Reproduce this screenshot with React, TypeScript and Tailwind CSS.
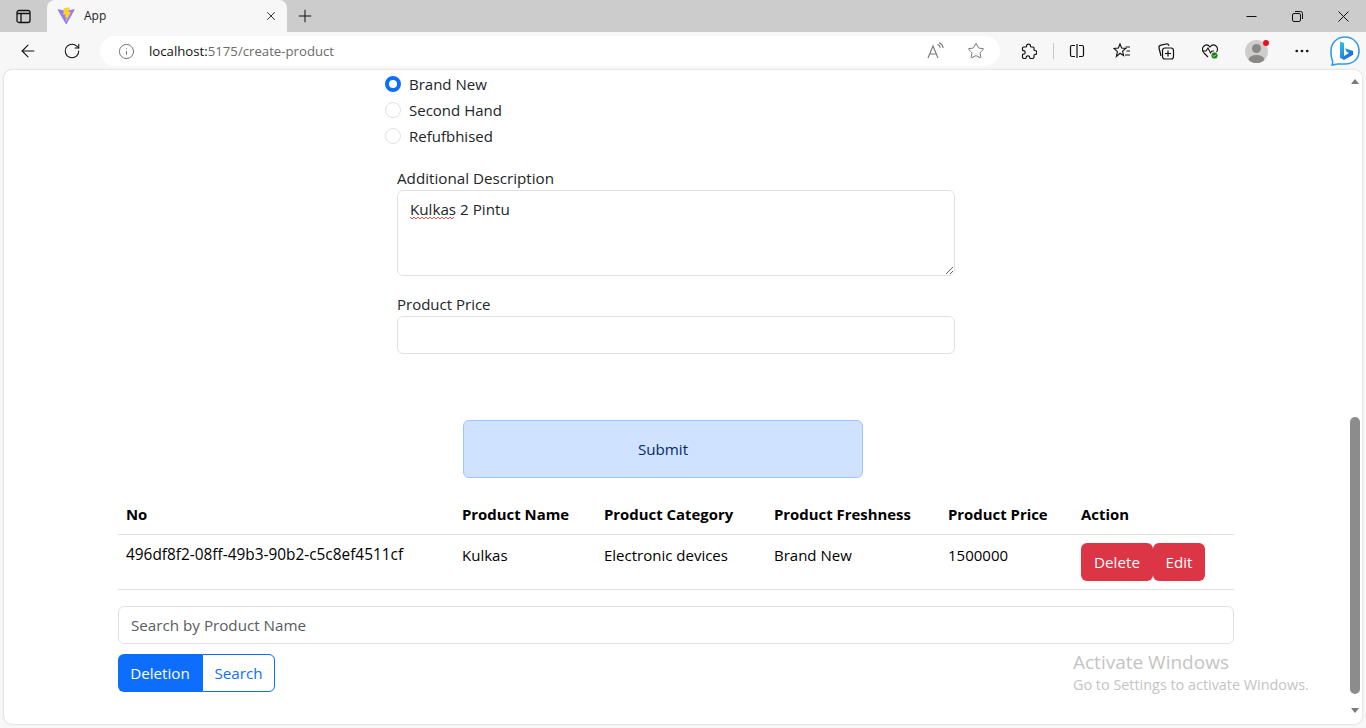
import { ArrowLeft, RotateCw, Info, Star, Plus, X, MoreHorizontal } from 'lucide-react'

const rows = ['Brand New', 'Second Hand', 'Refufbhised']

function ViteLogo() {
  return (
    <svg width="18" height="18" viewBox="0 0 410 404">
      <path fill="#8f7bff" d="M399 63 219 384c-4 7-14 7-18 0L18 63c-4-7 2-16 10-14l180 32c1 0 2 0 4 0l176-32c8-1 15 7 11 14Z" />
      <path fill="#ffd028" d="M292 1 156 28c-2 0-4 2-4 5l-8 141c0 3 3 6 6 5l38-9c4-1 7 2 6 6l-11 55c-1 4 3 7 6 6l23-7c4-1 7 2 6 6l-18 86c-1 5 6 8 9 3l2-3 106-212c2-4-1-8-5-7l-39 8c-4 1-7-3-6-6l25-88c1-4-3-8-6-7Z" />
    </svg>
  )
}

function BingLogo() {
  return (
    <svg width="32" height="32" viewBox="0 0 32 32">
      <defs>
        <linearGradient id="bingB" x1="0" y1="0" x2="1" y2="1">
          <stop offset="0" stopColor="#2fc6e8" />
          <stop offset="1" stopColor="#1a56d6" />
        </linearGradient>
      </defs>
      <path fill="#fff" stroke="#2f9be8" strokeWidth="1.6" d="M16 2c8 0 14 6 14 14s-6 13-14 13H9c-2 0-5 1-6 1 1-2 1-4 0-6-1-2-1-5-1-8C2 8 8 2 16 2Z" />
      <path fill="url(#bingB)" d="M11 6.500l4 1.500v13l5-3-2.500-1.200-1.400-3.600 8 2.800v3.700L15 25l-4-2.200Z" />
    </svg>
  )
}

function BrowserChrome() {
  return (
    <>
      <div className="flex h-8 shrink-0 items-end bg-[#cccccc]">
        <div className="flex h-8 w-[47px] items-center justify-center">
          <svg width="15" height="15" viewBox="0 0 15 15" fill="none" stroke="#111" strokeWidth="1.3">
            <rect x="1" y="1.500" width="13" height="12" rx="2" />
            <path d="M1 4.500h13M5 4.500v9" />
          </svg>
        </div>
        <div className="flex h-8 w-[240px] items-center rounded-t-lg bg-[#f7f7f7] pl-[10px] pr-[9px]">
          <ViteLogo />
          <span className="ml-[9px] flex-1 text-xs text-[#222]">App</span>
          <X size={14} strokeWidth={1.6} className="text-[#222]" />
        </div>
        <div className="flex h-8 w-[36px] items-center justify-center">
          <Plus size={20} strokeWidth={1.2} className="text-[#111]" />
        </div>
        <div className="flex-1" />
        <div className="flex h-8 items-center text-[#111]">
          <div className="flex w-[46px] justify-center">
            <svg width="11" height="11" viewBox="0 0 11 11" stroke="#111" strokeWidth="1">
              <path d="M0.500 5.500h10" />
            </svg>
          </div>
          <div className="flex w-[46px] justify-center">
            <svg width="11" height="11" viewBox="0 0 11 11" fill="none" stroke="#111" strokeWidth="1">
              <rect x="0.500" y="2.500" width="8" height="8" rx="1.500" />
              <path d="M3 0.500h5.500a2 2 0 0 1 2 2V8" />
            </svg>
          </div>
          <div className="flex w-[46px] justify-center">
            <svg width="11" height="11" viewBox="0 0 11 11" stroke="#111" strokeWidth="1">
              <path d="M0.500 0.500l10 10M10.500 0.500l-10 10" />
            </svg>
          </div>
        </div>
      </div>
      <div className="flex h-[38px] shrink-0 items-center bg-[#f7f7f7]">
        <div className="flex w-[100px] items-center pl-[18px]">
          <ArrowLeft size={20} strokeWidth={1.3} className="text-[#111]" />
          <RotateCw size={18} strokeWidth={1.4} className="ml-[25px] text-[#111]" />
        </div>
        <div className="flex h-[30px] w-[900px] items-center rounded-full bg-white pl-[18px] pr-[15px]">
          <Info size={17} strokeWidth={1.3} className="text-[#666]" />
          <span className="ml-[14px] mt-px text-[13.200px] text-[#111]">
            localhost:<span className="text-[#6b6b6b]">5175/create-product</span>
          </span>
          <div className="flex-1" />
          <svg width="18" height="18" viewBox="0 0 18 18" fill="none" stroke="#777" strokeWidth="1.1">
            <path d="M1 16 6 4l5 12M3 12h6M10.500 2.500c1.500.5 2.500 1.800 2.800 3.300M12 0.800c2.200.8 3.800 2.800 4.200 5" />
          </svg>
          <Star size={18} strokeWidth={1.2} className="ml-[22px] text-[#666]" />
        </div>
        <div className="flex flex-1 items-center pl-[20px] text-[#111]">
          <svg width="17" height="17" viewBox="0 0 17 17" fill="none" stroke="#111" strokeWidth="1.2">
            <path d="M6.500 3.200a2 2 0 0 1 4 0c0 .6 0 .8 1 .8h1.500a1 1 0 0 1 1 1v1.500c0 1 .3 1 .8 1a2 2 0 0 1 0 4c-.5 0-.8 0-.8 1V14a1.500 1.500 0 0 1-1.500 1.500h-2c-.8 0-.8-.4-.8-.9a1.800 1.800 0 0 0-3.600 0c0 .5 0 .9-.8.9H4a1.500 1.500 0 0 1-1.500-1.500v-2c0-.8.4-.8.9-.8a1.800 1.800 0 0 0 0-3.600c-.5 0-.9 0-.9-.8V5a1 1 0 0 1 1-1h1.800c1 0 1.200-.2 1.200-.8Z" />
          </svg>
          <div className="ml-[16px] h-[16px] w-px bg-[#c8c8c8]" />
          <svg className="ml-[15px]" width="16" height="16" viewBox="0 0 16 16" fill="none" stroke="#111" strokeWidth="1.2">
            <path d="M6 2.500H3a1.500 1.500 0 0 0-1.500 1.500v8A1.500 1.500 0 0 0 3 13.500h3M10 2.500h3A1.500 1.500 0 0 1 14.500 4v8a1.500 1.500 0 0 1-1.500 1.500h-3M8 1v14" />
          </svg>
          <svg className="ml-[28px]" width="18" height="18" viewBox="0 0 18 18" fill="none" stroke="#111" strokeWidth="1.100">
            <path d="M7 2l1.600 4 4.200.4-3.200 2.800 1 4.300L7 11.300 3.400 14.500l1-4.800L1 6.400l4.400-.4ZM12.500 5H17M13.500 9H17M12 13h5" />
          </svg>
          <svg className="ml-[26px]" width="18" height="18" viewBox="0 0 18 18" fill="none" stroke="#111" strokeWidth="1.2">
            <path d="M4 14 2 6c-.3-1.500.5-2.500 2-2.800L9 2c1.500-.3 2.500.3 3 1.800" />
            <rect x="5.500" y="6" width="11" height="11" rx="2.500" fill="#f7f7f7" />
            <path d="M11 8.500v6M8 11.500h6" />
          </svg>
          <svg className="ml-[26px]" width="18" height="18" viewBox="0 0 18 18" fill="none" stroke="#111" strokeWidth="1.100">
            <path d="M3 11C1 8.500 1 5.500 3 4s4.500-1 6 1c1.500-2 4-2.500 6-1s2 4.500 0 7l-1 1M3 11l4 4M1 9h4l2-3 2.500 5 1.500-2h2" />
            <circle cx="13.500" cy="13.500" r="3.500" fill="#107c10" stroke="#f7f7f7" strokeWidth="0.8" />
            <path d="M12 13.500l1 1 2-2" stroke="#fff" strokeWidth="0.9" />
          </svg>
          <div className="relative ml-[26px] flex h-[23px] w-[23px] items-center justify-center overflow-hidden rounded-full bg-[#cfcdcb]">
            <svg width="23" height="23" viewBox="0 0 23 23" fill="#8a8886">
              <circle cx="11.500" cy="8.500" r="4.500" />
              <ellipse cx="11.500" cy="20" rx="8" ry="5" />
            </svg>
          </div>
          <div className="relative -ml-[5px] -mt-[16px] h-[6px] w-[6px] rounded-full bg-[#e81123]" />
          <MoreHorizontal size={18} strokeWidth={1.6} className="ml-[24px]" />
          <div className="ml-[18px]">
            <BingLogo />
          </div>
        </div>
      </div>
    </>
  )
}

function ProductForm() {
  return (
    <div className="mx-auto w-[582px] pt-px">
      {rows.map((label, i) => (
        <label key={label} className="flex h-[26px] items-center text-[15px] text-[#212529]">
          <input
            type="radio"
            name="freshness"
            defaultChecked={i === 0}
            className="h-4 w-4 appearance-none rounded-full border border-[#dee2e6] bg-white checked:border-[4px] checked:border-[#0d6efd]"
          />
          <span className="ml-2">{label}</span>
        </label>
      ))}
      <div className="px-3 pt-[17px]">
        <div className="h-6 text-[#212529]">Additional Description</div>
        <div className="relative">
          <textarea
            defaultValue="Kulkas 2 Pintu"
            spellCheck={false}
            className="block h-[86px] w-full rounded-md border border-[#dee2e6] px-3 py-[6px] text-[#212529] outline-none"
          />
          <svg className="absolute left-[13px] top-[26px]" width="45" height="4" viewBox="0 0 45 4" fill="none" stroke="#ef4444" strokeWidth="0.9">
            <path d="M0 1l2 2 2-2 2 2 2-2 2 2 2-2 2 2 2-2 2 2 2-2 2 2 2-2 2 2 2-2 2 2 2-2 2 2 2-2 2 2 2-2 2 2 2-2" />
          </svg>
        </div>
        <div className="mt-4 h-6 text-[15px] text-[#212529]">Product Price</div>
        <input className="block h-[38px] w-full rounded-md border border-[#dee2e6] px-3 outline-none" />
      </div>
      <button className="ml-[78px] mt-[66px] block h-[58px] w-[400px] rounded-md border border-[#9ec5fe] bg-[#cfe2ff] text-[#052c65]">
        Submit
      </button>
    </div>
  )
}

function ProductTable() {
  return (
    <div className="mx-auto mt-4 w-[1116px]">
      <table className="w-full table-fixed border-collapse text-left text-black">
        <thead className="text-[14.900px]">
          <tr className="border-b border-[#dee2e6]">
            <th className="w-[336px] px-2 py-2 font-bold">No</th>
            <th className="w-[142px] px-2 py-2 font-bold">Product Name</th>
            <th className="w-[170px] px-2 py-2 font-bold">Product Category</th>
            <th className="w-[174px] px-2 py-2 font-bold">Product Freshness</th>
            <th className="w-[133px] px-2 py-2 font-bold">Product Price</th>
            <th className="px-2 py-2 font-bold">Action</th>
          </tr>
        </thead>
        <tbody>
          <tr className="border-b border-[#dee2e6] align-top">
            <td className="px-2 py-2 text-[15.400px]">496df8f2-08ff-49b3-90b2-c5c8ef4511cf</td>
            <td className="px-2 py-2 text-[15px]">Kulkas</td>
            <td className="px-2 py-2 text-[15px]">Electronic devices</td>
            <td className="px-2 py-2 text-[15px]">Brand New</td>
            <td className="px-2 py-2 text-[15px]">1500000</td>
            <td className="px-2 py-2">
              <div className="flex">
                <button className="h-[38px] w-[72px] rounded-md bg-[#dc3545] text-white">Delete</button>
                <button className="h-[38px] w-[52px] rounded-md bg-[#dc3545] text-white">Edit</button>
              </div>
            </td>
          </tr>
        </tbody>
      </table>
      <input
        placeholder="Search by Product Name"
        className="mt-4 block h-[38px] w-full rounded-md border border-[#dee2e6] px-3 outline-none placeholder:text-[#595c5f]"
      />
      <div className="mt-[10px] flex">
        <button className="h-[38px] w-[84px] rounded-l-md bg-[#0d6efd] text-white">Deletion</button>
        <button className="h-[38px] w-[73px] rounded-r-md border border-[#0d6efd] bg-white text-[#0d6efd]">Search</button>
      </div>
    </div>
  )
}

export default function App() {
  return (
    <div className='flex h-screen flex-col overflow-hidden bg-[#f7f7f7] [font-family:"Open_Sans",sans-serif]'>
      <BrowserChrome />
      <div className="relative mx-1 mb-[4px] flex min-h-0 flex-1 overflow-hidden rounded-lg bg-white shadow-[0_0_2px_rgba(0,0,0,0.25)]">
        <main className="min-w-0 flex-1 overflow-hidden text-[15.200px] leading-6">
          <ProductForm />
          <ProductTable />
        </main>
        <div className="flex w-[14px] shrink-0 flex-col items-center bg-white">
          <div className="mt-[9px] h-0 w-0 border-x-[4px] border-b-[5px] border-x-transparent border-b-[#7a7a7a]" />
          <div className="mt-[333px] h-[277px] w-[10px] rounded-full bg-[#8c8c8c]" />
          <div className="mt-[14px] h-0 w-0 border-x-[4px] border-t-[5px] border-x-transparent border-t-[#7a7a7a]" />
        </div>
        <div className="absolute left-[1069px] top-[579px] text-[#c4c4c4]">
          <div className="text-[19px] leading-[26px]">Activate Windows</div>
          <div className="text-[14.400px] leading-[19px]">Go to Settings to activate Windows.</div>
        </div>
      </div>
    </div>
  )
}
